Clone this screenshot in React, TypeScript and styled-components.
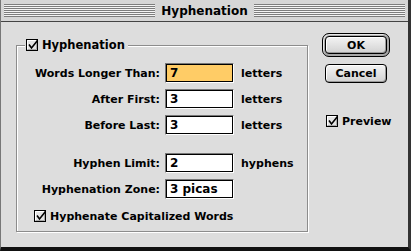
import React from "react"
import styled, { createGlobalStyle } from "styled-components"

//#region Css
const GlobalStyle = createGlobalStyle`
    html, body {
        margin: 0;
        padding: 0;
        background: #dcdcdc;
    }
    * {
        box-sizing: border-box;
    }
`

const Window = styled.div`
    width: 411px;
    height: 251px;
    display: flex;
    flex-direction: column;
    background: #dddddd;
    border-left: 1px solid #777;
    border-right: 3px solid #333;
    border-bottom: 4px solid #111;
    font-family: "DejaVu Sans", Verdana, sans-serif;
    font-weight: bold;
    font-size: 11px;
    color: #000;
`

const TitleBar = styled.div`
    height: 22px;
    flex: none;
    display: flex;
    align-items: center;
    padding: 0 3px;
    gap: 4px;
    background: #d6d6d6;
    border-bottom: 1px solid #444;
`

const Stripes = styled.div`
    flex: 1;
    height: 13px;
    background: repeating-linear-gradient(
        to bottom,
        #7d7d7d 0px,
        #7d7d7d 1px,
        #f4f4f4 1px,
        #f4f4f4 2px
    );
`

const Title = styled.div`
    font-size: 12px;
    padding: 0 2px;
`

const Body = styled.div`
    flex: 1;
    display: flex;
    align-items: flex-start;
    padding: 8px 0 0 15px;
    gap: 14px;
`

const Group = styled.fieldset`
    margin: 8px 0 0 0;
    width: 292px;
    height: 194px;
    padding: 10px 0 0 0;
    border: 1px solid #8c8c8c;
    box-shadow: 1px 1px 0 #fff, inset 1px 1px 0 #fff;
`

const Legend = styled.legend`
    margin-left: 8px;
    padding: 0 3px 0 1px;
    background: #dddddd;
    display: flex;
    align-items: center;
    gap: 3px;
    line-height: 15px;
    font-size: 11.5px;
`

const Form = styled.div`
    display: grid;
    grid-template-columns: 143px 69px auto;
    column-gap: 5px;
    row-gap: 6px;
    align-items: center;
`

interface RowProps {
    $gap?: number
}

const Label = styled.div<RowProps>`
    text-align: right;
    white-space: nowrap;
    margin-top: ${props => props.$gap || 0}px;
`

const Field = styled.div<{ $focus?: boolean, $gap?: number }>`
    height: 20px;
    border: 1px solid #777;
    border-right-color: #fff;
    border-bottom-color: #fff;
    margin-top: ${props => props.$gap || 0}px;
    div {
        height: 100%;
        border: 1px solid #000;
        background: ${props => props.$focus ? "#ffcc66" : "#fff"};
        padding: 0 3px;
        line-height: 16px;
        font-size: 12px;
    }
`

const Unit = styled.div<RowProps>`
    padding-left: 2px;
    margin-top: ${props => props.$gap || 0}px;
`

const CheckRow = styled.label`
    display: flex;
    align-items: center;
    gap: 3px;
    white-space: nowrap;
`

const LowerCheck = styled(CheckRow)`
    margin: 11px 0 0 17px;
`

const Side = styled.div`
    margin-top: 3px;
    display: flex;
    flex-direction: column;
    align-items: flex-start;
`

const DefaultRing = styled.div`
    width: 68px;
    height: 24px;
    padding: 2px;
    border: 1px solid #000;
    border-radius: 7px;
    background: #a8a8a8;
    box-shadow: inset 1px 1px 0 #e8e8e8;
`

const Button = styled.button`
    font: inherit;
    color: #000;
    width: 100%;
    height: 100%;
    padding: 0;
    border: 1px solid #000;
    border-radius: 4px;
    background: linear-gradient(#f4f4f4, #d2d2d2);
    box-shadow: inset -1px -1px 0 #9a9a9a, inset 1px 1px 0 #fff;
`

const CancelWrap = styled.div`
    width: 62px;
    height: 19px;
    margin: 7px 0 0 3px;
`

const PreviewCheck = styled(CheckRow)`
    margin: 32px 0 0 4px;
`
//#endregion

const CheckBox = () => (
    <svg width="13" height="13" viewBox="0 0 13 13">
        <rect x="0.5" y="0.5" width="11" height="11" fill="#e4e4e4" stroke="#000" />
        <path d="M1.5 10.5 V1.5 H10.5" stroke="#fff" fill="none" />
        <path d="M1.5 10.5 H10.5 V1.5" stroke="#aaa" fill="none" />
        <path d="M3 5.5 L5.5 9 L11.5 1.5" stroke="#000" strokeWidth="1.6" fill="none" />
    </svg>
)

const rows = [
    { label: "Words Longer Than:", value: "7", unit: "letters", focus: true },
    { label: "After First:", value: "3", unit: "letters" },
    { label: "Before Last:", value: "3", unit: "letters" },
    { label: "Hyphen Limit:", value: "2", unit: "hyphens", gap: 12 },
    { label: "Hyphenation Zone:", value: "3 picas", unit: "" },
]

const App = () => {
    return (
        <>
            <GlobalStyle />
            <Window>
                <TitleBar>
                    <Stripes />
                    <Title>Hyphenation</Title>
                    <Stripes />
                </TitleBar>
                <Body>
                    <Group>
                        <Legend>
                            <CheckBox />
                            Hyphenation
                        </Legend>
                        <Form>
                            {rows.map(r => (
                                <React.Fragment key={r.label}>
                                    <Label $gap={r.gap}>{r.label}</Label>
                                    <Field $focus={r.focus} $gap={r.gap}><div>{r.value}</div></Field>
                                    <Unit $gap={r.gap}>{r.unit}</Unit>
                                </React.Fragment>
                            ))}
                        </Form>
                        <LowerCheck>
                            <CheckBox />
                            Hyphenate Capitalized Words
                        </LowerCheck>
                    </Group>
                    <Side>
                        <DefaultRing>
                            <Button>OK</Button>
                        </DefaultRing>
                        <CancelWrap>
                            <Button>Cancel</Button>
                        </CancelWrap>
                        <PreviewCheck>
                            <CheckBox />
                            Preview
                        </PreviewCheck>
                    </Side>
                </Body>
            </Window>
        </>
    )
}

export default App
